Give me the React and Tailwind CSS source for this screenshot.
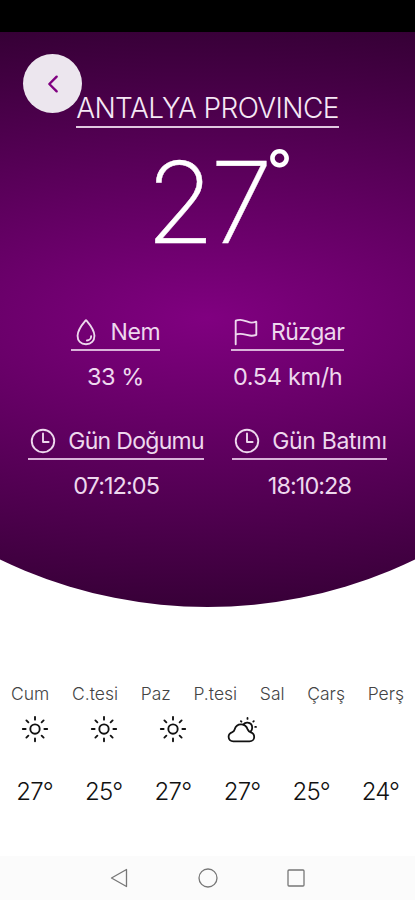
import React from 'react';
import {
  IoChevronBack,
  IoFlagOutline,
  IoSunnyOutline,
  IoTimeOutline,
  IoWaterOutline,
} from 'react-icons/io5';

function PartlySunny({ className }) {
  return (
    <svg className={className} viewBox="0 0 30 30" fill="none" stroke="currentColor" strokeWidth="1.8" strokeLinecap="round" strokeLinejoin="round">
      <path d="M6.3 27.3h16.2c2.6 0 4.7-1.8 4.7-4.4 0-2.4-1.5-4-3.500-4.600-1.600-.4-2.300-1.100-2.900-2.600C19.800 12.600 17.400 10.400 14 10.400c-3.400 0-5.600 2.200-6.400 5.200-.4 1.500-1 2-2.300 2.500C3 18.900 1.600 20.500 1.600 22.800c0 2.700 2 4.500 4.700 4.500z" />
      <path d="M16.300 10.600c1.200-1.500 2.600-2.100 4.300-1.900 2.700.3 4.600 2.400 4.600 5 0 1.500-.5 2.800-1.500 3.800" />
      <path d="M20.500 4v.9M13.900 7.200l.5.5M26.800 7.100l-.5.5M28.200 12.900h.8" />
    </svg>
  );
}

const days = ['Cum', 'C.tesi', 'Paz', 'P.tesi', 'Sal', 'Çarş', 'Perş'];

const forecast = [
  { temp: 27, icon: IoSunnyOutline },
  { temp: 25, icon: IoSunnyOutline },
  { temp: 27, icon: IoSunnyOutline },
  { temp: 27, icon: PartlySunny },
  { temp: 25 },
  { temp: 24 },
];

function Stat({ icon: Icon, label, value, labelClass, valueClass }) {
  return (
    <div className="flex flex-col items-center text-[#eed8ee]">
      <div className="flex h-9 items-center gap-[10px] border-b-2 border-[#d9b3d9]">
        <Icon className="h-[30px] w-[30px] shrink-0" />
        <span className={`text-[23px] leading-9 ${labelClass}`}>{label}</span>
      </div>
      <span className={`mt-[8px] text-[23.5px] leading-9 ${valueClass}`}>{value}</span>
    </div>
  );
}

function App() {
  return (
    <div className="flex h-[900px] w-full flex-col overflow-hidden bg-white font-['Inter',sans-serif] whitespace-nowrap">
      {/* Status bar */}
      <div className="h-8 shrink-0 bg-black" />

      {/* Current weather */}
      <section className="relative h-[575px] shrink-0 bg-[radial-gradient(760px_300px_at_50%_286px,#800080,#350035)] [clip-path:circle(477px_at_50%_98px)]">
        <button className="absolute top-[22px] left-[23px] flex h-[59px] w-[59px] items-center justify-center rounded-full bg-[#ece6ee]">
          <IoChevronBack className="h-[26px] w-[26px] text-[#800080]" />
        </button>

        <div className="flex flex-col items-center pt-[58px]">
          <h1 className="h-[38px] border-b-2 border-[#e0c8e0] text-[28px] leading-9 font-light tracking-[-0.6px] text-[#f5e8f5]">
            ANTALYA PROVINCE
          </h1>
          <div className="mt-[14px] flex h-[120px] pl-[23px] text-white">
            <span className="text-[113px] leading-[120px] font-extralight tracking-[-5px] [-webkit-text-stroke:0.4px_white]">27</span>
            <span className="text-[56px] leading-[56px] -ml-px font-medium">°</span>
          </div>
        </div>

        <div className="mt-[53px] flex justify-evenly">
          <Stat icon={IoWaterOutline} label="Nem" value="33 %" labelClass="tracking-[-0.4px]" valueClass="tracking-[-0.4px]" />
          <Stat icon={IoFlagOutline} label="Rüzgar" value="0.54 km/h" labelClass="tracking-[-0.5px]" valueClass="tracking-[-0.35px]" />
        </div>
        <div className="mt-[29px] flex justify-evenly">
          <Stat icon={IoTimeOutline} label="Gün Doğumu" value="07:12:05" labelClass="tracking-[-0.7px]" valueClass="tracking-[-0.95px]" />
          <Stat icon={IoTimeOutline} label="Gün Batımı" value="18:10:28" labelClass="tracking-[-0.3px]" valueClass="tracking-[-0.95px]" />
        </div>
      </section>

      {/* Forecast */}
      <section className="mt-[75px] flex-1">
        <div className="flex justify-between px-[11px] text-[17.5px] leading-6 font-light text-[#444]">
          {days.map((day) => (
            <span key={day}>{day}</span>
          ))}
        </div>
        <div className="mt-[8px] grid grid-cols-6">
          {forecast.map(({ temp, icon: Icon }, i) => (
            <div key={i} className="flex flex-col items-center text-[#111]">
              <div className="h-[30px]">{Icon && <Icon className="h-[30px] w-[30px]" />}</div>
              <span className="mt-[33px] text-[24px] leading-[30px] font-light tracking-[-0.8px]">{temp}°</span>
            </div>
          ))}
        </div>
      </section>

      {/* Android navigation */}
      <nav className="flex h-11 shrink-0 items-center justify-center gap-[64px] bg-[#fbfbfb] text-[#777]">
        <svg className="h-6 w-6" viewBox="0 0 24 24" fill="none" stroke="currentColor" strokeWidth="1.3" strokeLinejoin="round">
          <path d="M18.5 3.5v17L3.5 12z" />
        </svg>
        <svg className="h-6 w-6" viewBox="0 0 24 24" fill="none" stroke="currentColor" strokeWidth="1.3">
          <circle cx="12" cy="12" r="9" />
        </svg>
        <svg className="h-6 w-6" viewBox="0 0 24 24" fill="none" stroke="currentColor" strokeWidth="1.3">
          <rect x="4" y="4" width="16" height="16" rx="1" />
        </svg>
      </nav>
    </div>
  );
}

export default App;
